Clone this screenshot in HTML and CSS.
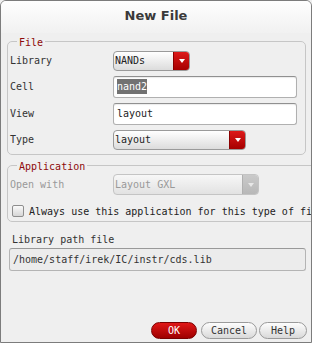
FILE: index.html
```html
<!DOCTYPE html>
<html lang="en">
<head>
    <meta charset="UTF-8">
    <title>New File</title>
    <link rel="stylesheet" href="styles.css">
</head>
<body>
    <div class="window">
        <div class="titlebar">New File</div>

        <fieldset class="group group-file">
            <legend>File</legend>
            <div class="form-grid">
                <label>Library</label>
                <div class="combo combo-lib">
                    <span class="combo-text">NANDs</span>
                    <span class="combo-btn"><span class="arrow"></span></span>
                </div>

                <label>Cell</label>
                <div class="text-input"><span class="selected">nand2</span></div>

                <label>View</label>
                <div class="text-input">layout</div>

                <label>Type</label>
                <div class="combo combo-type">
                    <span class="combo-text">layout</span>
                    <span class="combo-btn"><span class="arrow"></span></span>
                </div>
            </div>
        </fieldset>

        <fieldset class="group group-app">
            <legend>Application</legend>
            <div class="form-grid">
                <label class="disabled">Open with</label>
                <div class="combo combo-app disabled">
                    <span class="combo-text">Layout GXL</span>
                    <span class="combo-btn"><span class="arrow"></span></span>
                </div>
            </div>
            <div class="check-row">
                <span class="checkbox"></span>
                <span class="check-label">Always use this application for this type of file</span>
            </div>
        </fieldset>

        <div class="path-section">
            <label>Library path file</label>
            <div class="path-input">/home/staff/irek/IC/instr/cds.lib</div>
        </div>

        <div class="buttons">
            <button class="btn btn-ok">OK</button>
            <button class="btn btn-cancel">Cancel</button>
            <button class="btn btn-help">Help</button>
        </div>
    </div>
</body>
</html>
```

FILE: styles.css
```css
* {
    margin: 0;
    padding: 0;
    box-sizing: border-box;
}

body {
    width: 312px;
    height: 343px;
    overflow: hidden;
    background: #efefef;
    font-family: 'DejaVu Sans Mono', 'Liberation Mono', monospace;
    font-size: 10px;
    color: #333;
}

.window {
    width: 312px;
    height: 343px;
    display: flex;
    flex-direction: column;
    border: 1px solid #7c7c7c;
    border-radius: 6px 6px 0 0;
    background: #efefef;
    overflow: hidden;
}

.titlebar {
    height: 32px;
    line-height: 30px;
    text-align: center;
    font-family: 'DejaVu Sans', sans-serif;
    font-weight: bold;
    font-size: 13px;
    color: #3a3a3a;
    background: linear-gradient(#fefefe, #f1f1f1);
}

.group {
    margin: 2px 5px 0 6px;
    border: 1px solid #c6c6c6;
    border-radius: 5px;
    padding: 4px 0 4px 2px;
}

.group-app {
    margin-top: 4px;
    padding-top: 0;
}

.group legend {
    position: relative;
    top: 2px;
    margin-left: 7px;
    padding: 0 2px;
    line-height: 12px;
    font-size: 10px;
    color: #8e0a0a;
}

.form-grid {
    display: grid;
    grid-template-columns: 103px 1fr;
    grid-template-rows: 20px 22px 22px 20px;
    row-gap: 5px;
    align-items: center;
}

.group-app .form-grid {
    grid-template-rows: 21px;
    margin-top: 3px;
}

label {
    color: #333;
    line-height: 12px;
}

label.disabled {
    color: #999;
}

.combo {
    height: 20px;
    display: flex;
    border: 1px solid #9a9a9a;
    border-radius: 4px;
    background: linear-gradient(#ffffff, #dcdcdc);
    overflow: hidden;
}

.combo-lib {
    width: 77px;
}

.combo-type {
    width: 133px;
}

.combo-app {
    width: 146px;
    height: 21px;
}

.combo-text {
    flex: 1;
    line-height: 18px;
    padding-left: 1px;
    color: #222;
}

.combo-btn {
    width: 16px;
    display: flex;
    align-items: center;
    justify-content: center;
    background: linear-gradient(#dd1a1a, #a60000);
    border-left: 1px solid #8a0000;
}

.arrow {
    width: 0;
    height: 0;
    border-left: 3px solid transparent;
    border-right: 3px solid transparent;
    border-top: 4px solid #fff;
}

.combo.disabled {
    border-color: #c4c4c4;
    background: linear-gradient(#f7f7f7, #e2e2e2);
}

.combo.disabled .combo-text {
    color: #999;
    line-height: 19px;
}

.combo.disabled .combo-btn {
    background: linear-gradient(#cacaca, #b8b8b8);
    border-left-color: #b0b0b0;
}

.combo.disabled .arrow {
    border-top-color: #e8e8e8;
}

.text-input {
    height: 22px;
    margin-right: 8px;
    padding: 0 3px;
    line-height: 20px;
    font-size: 10px;
    background: #fff;
    border: 1px solid #b0b0b0;
    border-top-color: #909090;
    border-radius: 3px;
    box-shadow: inset 0 1px 1px rgba(0, 0, 0, 0.08);
    color: #222;
}

.selected {
    background: #727272;
    color: #fff;
    padding: 2px 0;
}

.check-row {
    display: flex;
    align-items: center;
    margin-top: 10px;
    margin-left: 2px;
    white-space: nowrap;
}

.checkbox {
    width: 12px;
    height: 12px;
    margin-right: 5px;
    border: 1px solid #8e8e8e;
    border-radius: 2px;
    background: linear-gradient(#fafafa, #d6d6d6);
}

.check-label {
    color: #222;
}

.path-section {
    padding: 12px 5px 0 8px;
}

.path-section label {
    display: block;
    padding-left: 3px;
    margin-bottom: 2px;
}

.path-input {
    height: 23px;
    line-height: 21px;
    padding: 0 3px;
    background: #ececec;
    border: 1px solid #b4b4b4;
    border-top-color: #999;
    border-radius: 3px;
    color: #333;
}

.buttons {
    margin-top: auto;
    display: flex;
    justify-content: flex-end;
    padding: 0 4px 3px 0;
}

.btn {
    height: 17px;
    padding: 0;
    font-family: 'DejaVu Sans Mono', 'Liberation Mono', monospace;
    font-size: 10px;
    color: #333;
    border: 1px solid #9a9a9a;
    border-radius: 9px;
    background: linear-gradient(#fdfdfd, #d9d9d9);
}

.btn-ok {
    width: 46px;
    margin-right: 4px;
    color: #fff;
    border-color: #7a0000;
    background: linear-gradient(#e01717, #9e0000);
}

.btn-cancel {
    width: 56px;
    margin-right: 2px;
}

.btn-help {
    width: 48px;
}
```
